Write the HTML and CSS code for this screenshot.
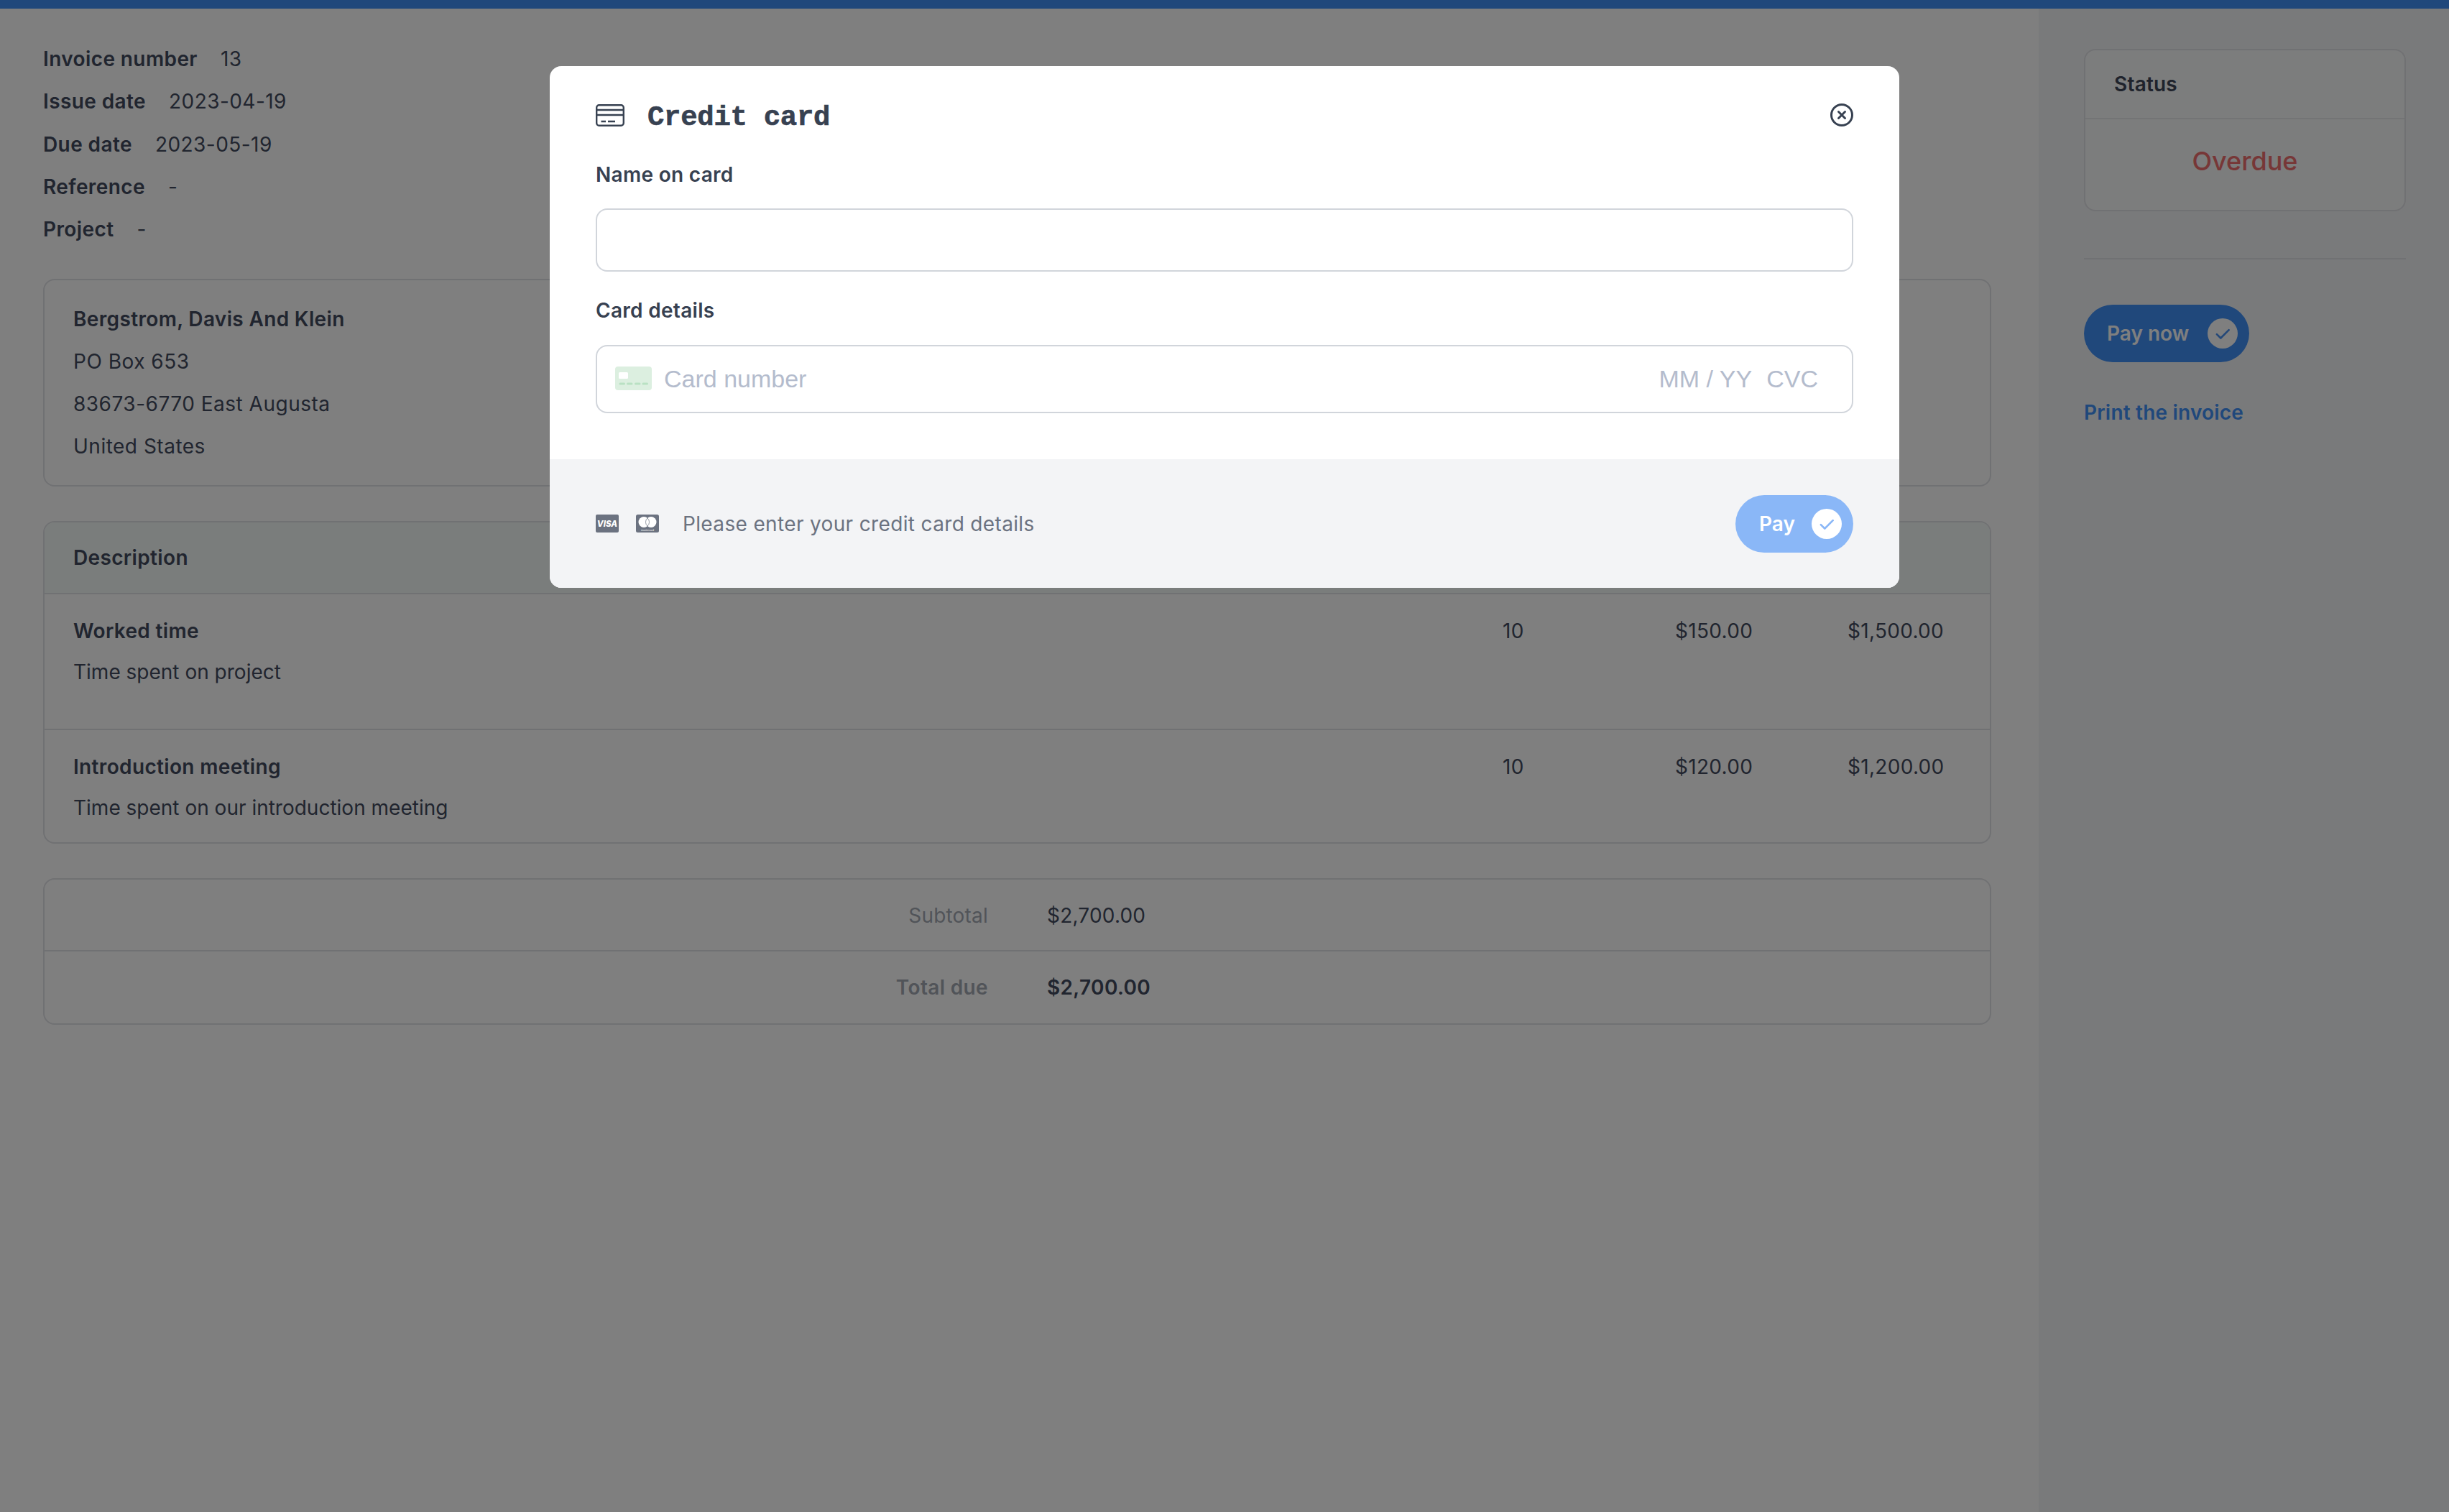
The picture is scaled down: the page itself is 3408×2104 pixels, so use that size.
FILE: index.html
```html
<!DOCTYPE html>
<html lang="en">
<head>
<meta charset="utf-8">
<title>Invoice 13</title>
<link rel="stylesheet" href="styles.css">
</head>
<body>
<div class="topbar"></div>
<div class="page">
  <main class="main">
    <dl class="meta">
      <div class="meta-row"><dt>Invoice number</dt><dd>13</dd></div>
      <div class="meta-row"><dt>Issue date</dt><dd>2023-04-19</dd></div>
      <div class="meta-row"><dt>Due date</dt><dd>2023-05-19</dd></div>
      <div class="meta-row"><dt>Reference</dt><dd>-</dd></div>
      <div class="meta-row"><dt>Project</dt><dd>-</dd></div>
    </dl>
    <section class="card address">
      <p class="strong">Bergstrom, Davis And Klein</p>
      <p>PO Box 653</p>
      <p>83673-6770 East Augusta</p>
      <p>United States</p>
    </section>
    <section class="card lines">
      <div class="line-head strong">Description</div>
      <div class="line line-first">
        <div class="line-desc"><p class="strong">Worked time</p><p>Time spent on project</p></div>
        <div class="num">10</div><div class="num">$150.00</div><div class="num">$1,500.00</div>
      </div>
      <div class="line line-last">
        <div class="line-desc"><p class="strong">Introduction meeting</p><p>Time spent on our introduction meeting</p></div>
        <div class="num">10</div><div class="num">$120.00</div><div class="num">$1,200.00</div>
      </div>
    </section>
    <section class="card totals">
      <div class="total-row"><span class="total-label">Subtotal</span><span>$2,700.00</span></div>
      <div class="total-row total-due"><span class="total-label">Total due</span><span>$2,700.00</span></div>
    </section>
  </main>
  <aside class="side">
    <section class="card status">
      <div class="status-head">Status</div>
      <div class="status-body">Overdue</div>
    </section>
    <hr class="side-rule">
    <a class="btn btn-now" href="#">Pay now
      <span class="btn-check"><svg viewBox="0 0 24 24" width="26" height="26" fill="none" stroke="#4a90f0" stroke-width="2.4" stroke-linecap="round" stroke-linejoin="round"><path d="M4.5 13l5 5L20 7.5"/></svg></span>
    </a>
    <a class="print" href="#">Print the invoice</a>
  </aside>
</div>

<div class="overlay">
  <div class="modal">
    <div class="modal-body">
      <header class="modal-head">
        <svg class="head-icon" viewBox="0 0 40 31" width="40" height="31" fill="none" stroke="#374151" stroke-width="2.4"><rect x="1.2" y="1.2" width="37.6" height="28.6" rx="3.5"/><path d="M1 8h38M1 15h38"/><path d="M7.5 24h6.5M17 24h10"/></svg>
        <h2 class="modal-title">Credit card</h2>
        <svg class="close-icon" viewBox="0 0 32 32" width="32" height="32" fill="none" stroke="#374151" stroke-width="3" stroke-linecap="round"><circle cx="16" cy="16" r="14.5"/><path d="M11.5 11.5l9 9M20.5 11.5l-9 9"/></svg>
      </header>
      <label class="field-label label-name" for="card-name">Name on card</label>
      <input class="text-input" id="card-name" type="text">
      <div class="field-label label-card">Card details</div>
      <div class="card-input">
        <svg class="green-card" viewBox="0 0 51 33" width="51" height="33"><rect width="51" height="33" rx="4" fill="#dcefe0"/><rect x="5" y="8" width="13" height="9" rx="1.5" fill="#fff"/><g fill="#b9e1c3"><rect x="5.5" y="22.5" width="8.5" height="3" rx="1.5"/><rect x="16" y="22.5" width="8.5" height="3" rx="1.5"/><rect x="27" y="22.5" width="8.5" height="3" rx="1.5"/><rect x="37.5" y="22.5" width="8.5" height="3" rx="1.5"/></g></svg>
        <span class="ph ph-number">Card number</span>
        <span class="ph ph-date">MM / YY</span>
        <span class="ph ph-cvc">CVC</span>
      </div>
    </div>
    <footer class="modal-foot">
      <svg class="brand" viewBox="0 0 32 25" width="32" height="25"><rect width="32" height="25" rx="2" fill="#6b7280"/><text x="16" y="16.5" text-anchor="middle" class="visa-text">VISA</text></svg>
      <svg class="brand brand-mc" viewBox="0 0 32 25" width="32" height="25"><rect width="32" height="25" rx="2.5" fill="#6b7280"/><circle cx="11" cy="10.5" r="7.5" fill="#fff"/><circle cx="21" cy="10.5" r="7.5" fill="#fff"/><path d="M16 4.9a7.5 7.5 0 0 1 0 11.2a7.5 7.5 0 0 1 0-11.2z" fill="#fff" stroke="#6b7280" stroke-width=".7"/><text x="16" y="23" text-anchor="middle" class="mc-text">mastercard</text></svg>
      <span class="foot-text">Please enter your credit card details</span>
      <button class="btn btn-pay" type="button">Pay
        <span class="btn-check"><svg viewBox="0 0 24 24" width="26" height="26" fill="none" stroke="#8ab7f7" stroke-width="2.4" stroke-linecap="round" stroke-linejoin="round"><path d="M4.5 13l5 5L20 7.5"/></svg></span>
      </button>
    </footer>
  </div>
</div>
</body>
</html>
```
FILE: styles.css
```css
* { box-sizing: border-box; }
html, body { margin: 0; height: 100%; }
body {
  font-family: Inter, "Liberation Sans", sans-serif;
  font-size: 28px;
  line-height: 40px;
  color: #424a5e;
  background: #fff;
  overflow: hidden;
}
p, dl, dd, dt, h2 { margin: 0; }
.strong { font-weight: 600; letter-spacing: .35px; }
.topbar { height: 12px; background: #4190f6; }
.page { display: flex; height: 2092px; }
.main { width: 2837px; padding: 50px 66px 0 60px; }
.side { flex: 1; background: #f3f4f6; padding: 56px 60px 0 63px; }

.meta { display: flex; flex-direction: column; gap: 19.25px; }
.meta-row { display: flex; gap: 32px; }
.meta-row dt { font-weight: 600; letter-spacing: .4px; }
.meta-row dd { letter-spacing: .45px; }

.card { border: 2px solid #e1e2e6; border-radius: 16px; }
.address { margin-top: 49px; padding: 34px 40px; display: flex; flex-direction: column; gap: 19px; height: 289px; letter-spacing: .5px; }

.lines { margin-top: 48px; }
.line-head { height: 100px; padding: 29px 40px 0; background: #f5fbf8; border-bottom: 2px solid #e1e2e6; border-radius: 14px 14px 0 0; }
.line { display: grid; grid-template-columns: 1fr 240px 240px 198px; }
.line-desc { display: flex; flex-direction: column; gap: 17px; padding-left: 40px; }
.num { letter-spacing: .3px; }
.line-first { height: 189px; padding-top: 31px; border-bottom: 2px solid #e1e2e6; }
.line-last { height: 156px; padding-top: 31px; }

.totals { margin-top: 48px; letter-spacing: .2px; }
.total-row { display: grid; grid-template-columns: 1313px 1fr; column-gap: 82px; height: 98px; padding-top: 30px; }
.total-row + .total-row { border-top: 2px solid #e1e2e6; height: 102px; padding-top: 30px; }
.total-label { text-align: right; color: #a3a8b2; }
.total-due { font-weight: 600; letter-spacing: .35px; }

.status { height: 226px; background: #f9fafb; }
.status-head { height: 96px; padding: 27px 40px 0; font-weight: 600; letter-spacing: .2px; border-bottom: 2px solid #e7e8eb; color: #3f4758; }
.status-body { padding-top: 33px; text-align: center; font-size: 36px; line-height: 50px; font-weight: 500; color: #ee6f6f; }
.side-rule { margin: 65px 0 63px; border: 0; border-top: 2px solid #e1e2e6; }

.btn {
  display: inline-flex; align-items: center; justify-content: space-between;
  height: 80px; border-radius: 40px; border: 0;
  font: 600 28px/40px Inter, "Liberation Sans", sans-serif; color: #fff; text-decoration: none;
}
.btn-check { display: flex; align-items: center; justify-content: center; width: 42px; height: 42px; border-radius: 50%; background: #fff; }
.btn-now { width: 230px; padding: 0 16px 0 32px; background: #4190f6; }
.print { display: block; margin-top: 50px; font-weight: 600; letter-spacing: .2px; color: #4190f6; text-decoration: none; }

.overlay { position: fixed; inset: 0; background: rgba(0,0,0,.5); display: flex; justify-content: center; align-items: flex-start; padding-top: 92px; }
.modal { width: 1878px; background: #fff; border-radius: 16px; overflow: hidden; }
.modal-body { padding: 48px 64px 64px 64px; }
.modal-head { display: flex; align-items: center; height: 40px; }
.modal-title { align-self: flex-start; margin: 4px 0 0 32px; flex: 1; font: 700 39px/40px "Liberation Mono", monospace; letter-spacing: -.3px; -webkit-text-stroke: .6px #374151; color: #374151; }
.head-icon, .close-icon { flex: none; }

.field-label { display: block; font-weight: 600; letter-spacing: .3px; color: #374151; }
.label-name { margin-top: 43px; }
.label-card { margin-top: 34px; }
.text-input { display: block; width: 100%; height: 88px; margin-top: 27px; border: 2px solid #d1d5db; border-radius: 16px; background: #fff; }
.label-card + .card-input { margin-top: 28px; }
.card-input { display: flex; align-items: center; height: 95px; padding: 0 47px 2px 25px; border: 2px solid #d1d5db; border-radius: 16px; font: 34px/40px "Liberation Sans", sans-serif; color: #b4bccd; }
.green-card { flex: none; }
.ph-number { margin-left: 17px; flex: 1; }
.ph-cvc { margin-left: 20px; }

.modal-foot { display: flex; align-items: center; height: 179px; padding: 0 64px; background: #f3f4f6; }
.brand { flex: none; }
.brand-mc { margin-left: 24px; }
.visa-text { font: italic 800 11.5px Inter, "Liberation Sans", sans-serif; fill: #fff; }
.mc-text { font: 3.6px "Liberation Sans", sans-serif; fill: #fff; }
.foot-text { flex: 1; margin-left: 33px; color: #6b7280; letter-spacing: .35px; }
.btn-pay { width: 164px; padding: 0 16px 0 33px; background: #8ab7f7; }
```
